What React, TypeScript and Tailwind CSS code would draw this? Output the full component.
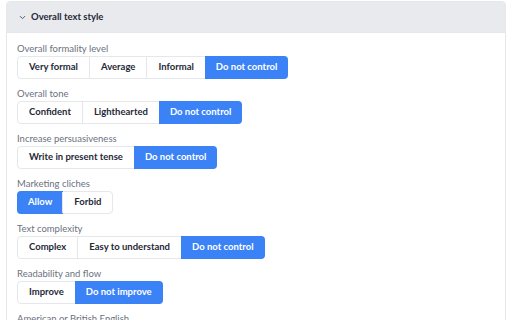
import React from 'react'
import { ChevronDown } from 'lucide-react'

const groups = [
  { label: 'Overall formality level', options: ['Very formal', 'Average', 'Informal', 'Do not control'], active: 3 },
  { label: 'Overall tone', options: ['Confident', 'Lighthearted', 'Do not control'], active: 2 },
  { label: 'Increase persuasiveness', options: ['Write in present tense', 'Do not control'], active: 1 },
  { label: 'Marketing cliches', options: ['Allow', 'Forbid'], active: 0 },
  { label: 'Text complexity', options: ['Complex', 'Easy to understand', 'Do not control'], active: 2 },
  { label: 'Readability and flow', options: ['Improve', 'Do not improve'], active: 1 },
  { label: 'American or British English', options: ['American', 'British', 'Do not control'], active: 2 },
]

function Segmented({ options, active }: { options: string[]; active: number }) {
  return (
    <div className="flex w-fit rounded-[4px] border border-[#e5e7eb] h-[23px]">
      {options.map((o, i) => (
        <button
          key={o}
          className={
            i === active
              ? 'px-[11px] text-[9.5px] font-bold text-white bg-[#3b82f6] -my-px -mr-px first:-ml-px first:rounded-l-[4px] last:rounded-r-[4px]'
              : 'px-[11px] text-[9.5px] font-bold text-[#1f2937] border-l border-[#e5e7eb] first:border-l-0'
          }
        >
          {o}
        </button>
      ))}
    </div>
  )
}

export default function App() {
  return (
    <div className="w-[512px] h-[320px] overflow-hidden bg-white pt-px px-[6px] font-['Lato',sans-serif]">
      <div className="border border-[#e5e7eb] rounded-t-[4px]">
        <div className="h-[31px] bg-[#e9eaed] border-b border-[#e5e7eb] flex items-center pl-[11px] gap-[4px]">
          <ChevronDown className="w-[9px] h-[9px] text-[#374151]" strokeWidth={2.2} />
          <span className="text-[9.5px] font-bold text-[#1f2937]">Overall text style</span>
        </div>
        <div className="pt-[10px] px-[10px] pb-4 flex flex-col gap-[9px]">
          {groups.map((g) => (
            <div key={g.label} className="flex flex-col gap-px">
              <div className="text-[9.5px] leading-[12px] text-[#6b7280]">{g.label}</div>
              <Segmented options={g.options} active={g.active} />
            </div>
          ))}
        </div>
      </div>
    </div>
  )
}
